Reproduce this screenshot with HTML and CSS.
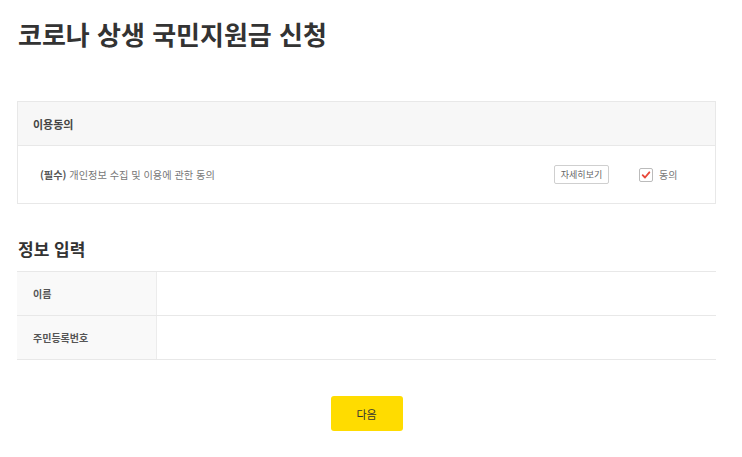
FILE: index.html
```html
<!DOCTYPE html>
<html lang="ko">
<head>
<meta charset="utf-8">
<title>코로나 상생 국민지원금 신청</title>
<link rel="stylesheet" href="styles.css">
</head>
<body>
<div class="page">
  <h1 class="title">코로나 상생 국민지원금 신청</h1>

  <section class="agree-box">
    <div class="agree-head">이용동의</div>
    <div class="agree-row">
      <p class="agree-text"><span class="req">(필수)</span> 개인정보 수집 및 이용에 관한 동의</p>
      <button class="detail-btn" type="button">자세히보기</button>
      <label class="check">
        <span class="check-box">
          <svg viewBox="0 0 12 12" width="10" height="10"><path d="M2 6.2 L4.8 9 L10 2.8" fill="none" stroke="#e8483a" stroke-width="2.2" stroke-linecap="round" stroke-linejoin="round"/></svg>
        </span>
        <span class="check-label">동의</span>
      </label>
    </div>
  </section>

  <h2 class="sub-title">정보 입력</h2>
  <div class="info-table">
    <div class="info-row">
      <div class="info-label">이름</div>
      <div class="info-value"></div>
    </div>
    <div class="info-row">
      <div class="info-label">주민등록번호</div>
      <div class="info-value"></div>
    </div>
  </div>

  <div class="actions">
    <button class="next-btn" type="button">다음</button>
  </div>
</div>
</body>
</html>
```

FILE: styles.css
```css
* { box-sizing: border-box; }
html, body { margin: 0; padding: 0; background: #fff; }
body {
  font-family: "Noto Sans CJK KR", "Noto Sans", sans-serif;
  color: #333;
}
.page {
  width: 699px;
  margin-left: 17px;
  padding-top: 16px;
}
.title {
  margin: 0 0 0 1px;
  font-size: 26px;
  line-height: 36px;
  font-weight: 700;
  color: #333;
}
.agree-box {
  margin-top: 49px;
  border: 1px solid #e8e8e8;
}
.agree-head {
  height: 44px;
  background: #f7f7f7;
  border-bottom: 1px solid #e8e8e8;
  padding-left: 15px;
  display: flex;
  align-items: center;
  font-size: 11px;
  font-weight: 700;
  color: #444;
}
.agree-row {
  height: 57px;
  display: flex;
  align-items: center;
  padding-left: 22px;
}
.agree-text {
  margin: 0;
  flex: 1;
  font-size: 10.2px;
  color: #777;
}
.req { color: #555; font-weight: 700; }
.detail-btn {
  width: 55px;
  height: 19px;
  padding: 0;
  border: 1px solid #cfcfcf;
  border-radius: 2px;
  background: #fff;
  font-family: inherit;
  font-size: 9px;
  color: #666;
  margin-right: 30px;
}
.check {
  display: flex;
  align-items: center;
  gap: 6px;
  width: 76px;
}
.check-box {
  width: 14px;
  height: 14px;
  border: 1px solid #bbb;
  border-radius: 2px;
  display: flex;
  align-items: center;
  justify-content: center;
}
.check-label { font-size: 10px; color: #777; }
.sub-title {
  margin: 33px 0 0 1px;
  font-size: 17px;
  line-height: 24px;
  font-weight: 700;
  color: #333;
}
.info-table {
  margin-top: 10px;
  border-top: 1px solid #e8e8e8;
}
.info-row {
  display: flex;
  height: 44px;
  border-bottom: 1px solid #e8e8e8;
}
.info-label {
  width: 140px;
  background: #f9f9f9;
  border-right: 1px solid #ececec;
  padding-left: 16px;
  display: flex;
  align-items: center;
  font-size: 10px;
  font-weight: 700;
  color: #555;
}
.info-value { flex: 1; }
.actions {
  display: flex;
  justify-content: center;
  margin-top: 36px;
}
.next-btn {
  width: 72px;
  height: 35px;
  border: 0;
  border-radius: 3px;
  background: #ffdc00;
  font-family: inherit;
  font-size: 11px;
  color: #333;
  padding: 0;
}
```
